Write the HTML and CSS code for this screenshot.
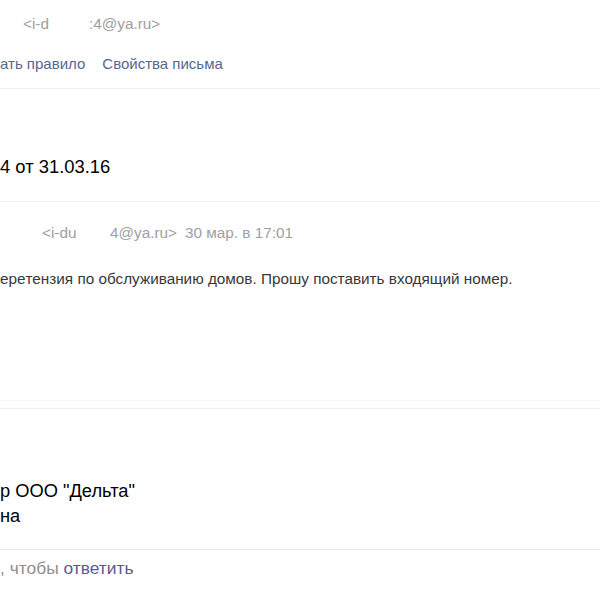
FILE: index.html
```html
<!DOCTYPE html>
<html lang="ru">
<head>
  <meta charset="UTF-8">
  <title>Письмо</title>
  <link rel="stylesheet" href="styles.css">
</head>
<body>
  <div class="mail">
    <div class="sender">
      <span class="addr-start">&lt;i-d</span><span class="addr-end">:4@ya.ru&gt;</span>
    </div>
    <div class="actions">
      <a href="#" class="action">ать правило</a>
      <a href="#" class="action">Свойства письма</a>
    </div>

    <div class="subject">4 от 31.03.16</div>

    <div class="message">
      <div class="meta">
        <span class="from-start">&lt;i-du</span><span class="from-end">4@ya.ru&gt;</span><span class="date">30 мар. в 17:01</span>
      </div>
      <p class="text">ерeтензия по обслуживанию домов. Прошу поставить входящий номер.</p>
    </div>

    <div class="signature">
      <div class="sig-line">р ООО "Дельта"</div>
      <div class="sig-line">на</div>
    </div>

    <div class="reply">
      <span>, чтобы </span><a href="#" class="reply-link">ответить</a>
    </div>
  </div>
</body>
</html>
```

FILE: styles.css
```css
* {
  margin: 0;
  padding: 0;
  box-sizing: border-box;
}

body {
  font-family: 'Liberation Sans', Arial, sans-serif;
  background: #ffffff;
  color: #000;
  overflow: hidden;
}

.mail {
  width: 600px;
}

.sender {
  height: 48px;
  line-height: 48px;
  font-size: 15.3px;
  color: #a0a0a0;
  padding-left: 23px;
  display: flex;
}

.addr-start {
  width: 66px;
}

.actions {
  height: 41px;
  display: flex;
  gap: 17px;
  line-height: 32px;
  border-bottom: 1px solid #f0f0f0;
  font-size: 15px;
}

.action {
  color: #56678f;
  text-decoration: none;
}

.subject {
  font-size: 18.4px;
  line-height: 24px;
  padding: 66px 0 22px 0;
  border-bottom: 1px solid #f0f0f0;
  height: 113px;
}

.message {
  height: 199px;
  border-bottom: 1px solid #f7f7f7;
}

.meta {
  display: flex;
  font-size: 15.3px;
  color: #a0a0a0;
  line-height: 20px;
  padding-top: 21px;
  padding-left: 42px;
}

.from-start {
  width: 68px;
}

.date {
  margin-left: 8px;
}

.text {
  font-size: 15.3px;
  color: #383838;
  line-height: 20px;
  margin-top: 26px;
}

.signature {
  border-top: 7px solid #fff;
  box-shadow: inset 0 1px 0 #f0f0f0;
  padding-top: 70px;
  height: 149px;
  border-bottom: 1px solid #e8e8e8;
}

.sig-line {
  font-size: 18.3px;
  line-height: 25px;
}

.reply {
  font-size: 17.4px;
  line-height: 20px;
  padding-top: 8px;
  color: #8f8f8f;
}

.reply-link {
  color: #5a5a94;
  text-decoration: none;
}
```
